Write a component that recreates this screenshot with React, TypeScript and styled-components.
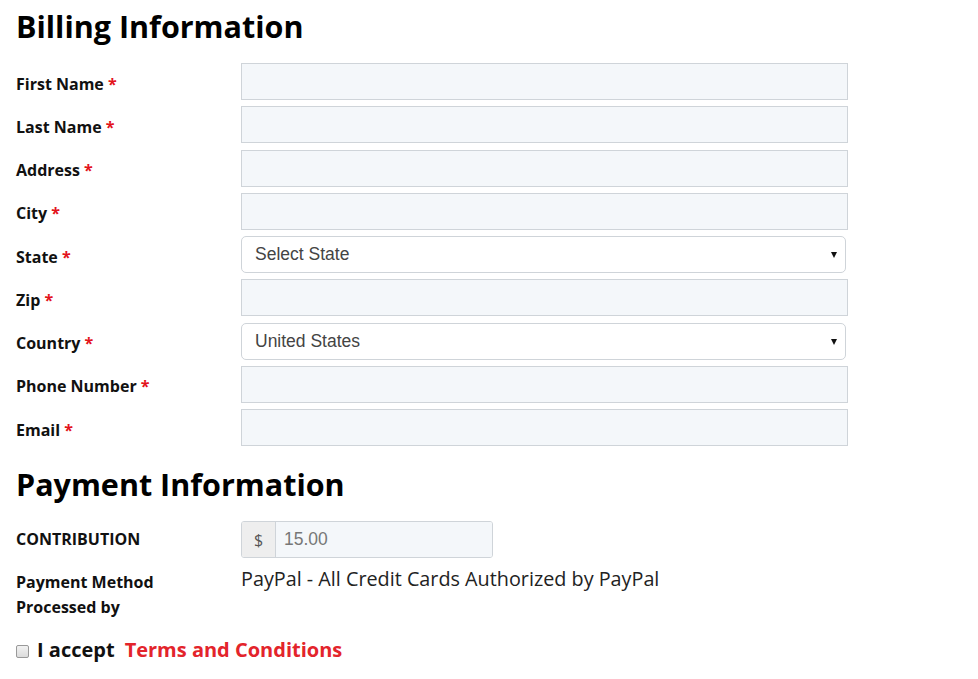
import React from 'react'
import styled, { createGlobalStyle } from 'styled-components'

const GlobalStyle = createGlobalStyle`
  body {
    margin: 0;
    background: #ffffff;
    font-family: 'Open Sans', 'Liberation Sans', sans-serif;
    color: #111;
  }
`

const Page = styled.div`
  padding: 6px 16px 20px 16px;
  width: 832px;
`

const Heading = styled.h2<{ $top?: number }>`
  margin: ${(p) => p.$top ?? 0}px 0 17px 0;
  font-size: 30.5px;
  font-weight: 700;
  line-height: 40px;
  color: #000;
`

const Form = styled.div`
  display: grid;
  grid-template-columns: 225px 607px;
  row-gap: 6.25px;
  align-items: center;
`

const Label = styled.label<{ $nudge?: number }>`
  font-size: 16px;
  font-weight: 700;
  color: #111;
  line-height: 25px;
  padding-top: ${(p) => p.$nudge ?? 0}px;
`

const Req = styled.span`
  color: #e3131b;
`

const TextInput = styled.input`
  box-sizing: border-box;
  width: 100%;
  height: 37px;
  border: 1px solid #cfd4d9;
  background: #f4f7fa;
  padding: 0 12px;
  font-size: 16px;
  font-family: 'Liberation Sans', Arial, sans-serif;
  outline: none;
`

const SelectBox = styled.div`
  position: relative;
  box-sizing: border-box;
  width: 605px;
  height: 37px;
  border: 1px solid #cfd4d9;
  border-radius: 5px;
  background: #fff;
  display: flex;
  align-items: center;
  padding: 0 13px;
  font-family: 'Liberation Sans', Arial, sans-serif;
  font-size: 17.5px;
  color: #444;
`

const Caret = styled.span`
  position: absolute;
  right: 8px;
  top: 15px;
  width: 0;
  height: 0;
  border-left: 3px solid transparent;
  border-right: 3px solid transparent;
  border-top: 6px solid #111;
`

const InputGroup = styled.div`
  display: flex;
  width: 252px;
  height: 37px;
  box-sizing: border-box;
  border: 1px solid #cfd4d9;
  border-radius: 3px;
  overflow: hidden;
`

const Addon = styled.span`
  width: 33px;
  display: flex;
  align-items: center;
  justify-content: center;
  background: #eeeeee;
  border-right: 1px solid #cfd4d9;
  font-size: 16px;
  color: #555;
`

const AmountField = styled.div`
  flex: 1;
  background: #f4f7fa;
  display: flex;
  align-items: center;
  padding: 0 8px;
  font-family: 'Liberation Sans', Arial, sans-serif;
  font-size: 17.5px;
  color: #777;
`

const PaymentRow = styled.div`
  display: grid;
  grid-template-columns: 225px 607px;
  margin-top: 12px;
  align-items: start;
`

const MethodText = styled.div`
  font-size: 19.8px;
  color: #222;
  line-height: 26px;
  margin-top: -4px;
`

const AcceptRow = styled.div`
  display: flex;
  align-items: center;
  margin-top: 16px;
`

const Check = styled.span`
  width: 13px;
  height: 13px;
  box-sizing: border-box;
  border: 1px solid #999;
  border-radius: 2px;
  background: linear-gradient(#f2f2f2, #dcdcdc);
  margin-right: 8px;
  margin-top: 4px;
`

const AcceptText = styled.span`
  font-size: 20px;
  font-weight: 700;
  color: #111;
  margin-right: 10px;
`

const TermsLink = styled.a`
  font-size: 20px;
  font-weight: 700;
  color: #e3242b;
  text-decoration: none;
`

const fields: { label: string; kind: 'text' | 'select'; value?: string }[] = [
  { label: 'First Name', kind: 'text' },
  { label: 'Last Name', kind: 'text' },
  { label: 'Address', kind: 'text' },
  { label: 'City', kind: 'text' },
  { label: 'State', kind: 'select', value: 'Select State' },
  { label: 'Zip', kind: 'text' },
  { label: 'Country', kind: 'select', value: 'United States' },
  { label: 'Phone Number', kind: 'text' },
  { label: 'Email', kind: 'text' },
]

export default function App() {
  return (
    <Page>
      <GlobalStyle />
      <Heading>Billing Information</Heading>
      <Form>
        {fields.map((f) => (
          <React.Fragment key={f.label}>
            <Label $nudge={5}>
              {f.label} <Req>*</Req>
            </Label>
            {f.kind === 'text' ? (
              <TextInput type="text" />
            ) : (
              <SelectBox>
                {f.value}
                <Caret />
              </SelectBox>
            )}
          </React.Fragment>
        ))}
      </Form>
      <Heading $top={18}>Payment Information</Heading>
      <Form>
        <Label>CONTRIBUTION</Label>
        <InputGroup>
          <Addon>$</Addon>
          <AmountField>15.00</AmountField>
        </InputGroup>
      </Form>
      <PaymentRow>
        <Label>
          Payment Method
          <br />
          Processed by
        </Label>
        <MethodText>PayPal - All Credit Cards Authorized by PayPal</MethodText>
      </PaymentRow>
      <AcceptRow>
        <Check />
        <AcceptText>I accept</AcceptText>
        <TermsLink href="#">Terms and Conditions</TermsLink>
      </AcceptRow>
    </Page>
  )
}
